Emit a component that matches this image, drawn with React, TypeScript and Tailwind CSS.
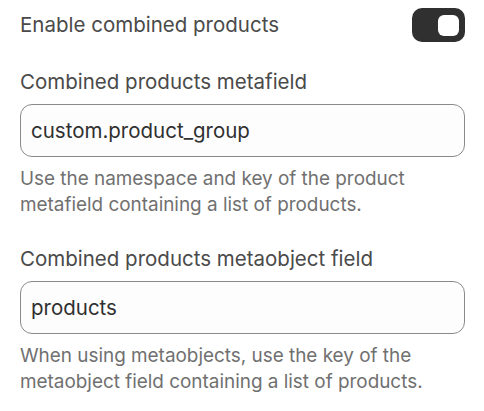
import { useState } from "react";

function Toggle({ checked, onChange }: { checked: boolean; onChange: (v: boolean) => void }) {
  return (
    <button
      type="button"
      role="switch"
      aria-checked={checked}
      onClick={() => onChange(!checked)}
      className={`flex items-center w-[53px] h-[34px] rounded-[10px] px-[6px] ${
        checked ? "bg-[#303030] justify-end" : "bg-[#d4d4d4] justify-start"
      }`}
    >
      <span className="block w-[21px] h-[21px] rounded-[6px] bg-white" />
    </button>
  );
}

function Field({ label, value, help }: { label: string; value: string; help: string }) {
  const [text, setText] = useState(value);
  return (
    <div className="flex flex-col">
      <label className="text-[20.5px] leading-[26px] text-[#4a4a4a]">{label}</label>
      <input
        type="text"
        value={text}
        onChange={(e) => setText(e.target.value)}
        className="mt-[9px] h-[53px] w-full rounded-[12px] border border-[#8a8a8a] bg-[#fdfdfd] px-[10px] text-[20.5px] text-[#303030] focus:outline-none"
      />
      <p className="mt-[9px] text-[18.9px] leading-[26px] text-[#707070]">{help}</p>
    </div>
  );
}

export default function App() {
  const [enabled, setEnabled] = useState(true);

  return (
    <div className="w-[484px] h-[411px] bg-white pl-[20px] pr-[19px] pt-[8px] font-['Inter',sans-serif]">
      {/* Toggle row */}
      <div className="flex items-center justify-between h-[34px]">
        <span className="text-[20.5px] text-[#4a4a4a]">Enable combined products</span>
        <Toggle checked={enabled} onChange={setEnabled} />
      </div>

      <div className="mt-[27px] flex flex-col gap-[28px]">
        <Field
          label="Combined products metafield"
          value="custom.product_group"
          help="Use the namespace and key of the product metafield containing a list of products."
        />
        <Field
          label="Combined products metaobject field"
          value="products"
          help="When using metaobjects, use the key of the metaobject field containing a list of products."
        />
      </div>
    </div>
  );
}
